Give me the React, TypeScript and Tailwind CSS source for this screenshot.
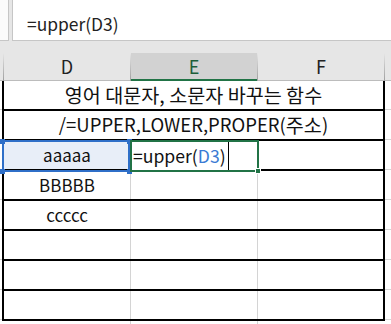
import React from "react";

const cellRows = ["aaaaa", "BBBBB", "ccccc", "", "", ""];

function Sep() {
  return <div className="w-px self-stretch bg-gradient-to-b from-[#e6e6e6] to-[#9e9e9e]" />;
}

function RowShell({ children }: { children: React.ReactNode }) {
  return (
    <div className="flex h-[30px]">
      <div className="w-[2px] flex flex-col justify-end">
        <div className="h-px bg-[#d4d4d4] mb-[1px]" />
      </div>
      <div className="w-[383px] flex border-l-2 border-r-2 border-b-2 border-black">{children}</div>
      <div className="flex-1 flex flex-col justify-end">
        <div className="h-px bg-[#d4d4d4] mb-[1px]" />
      </div>
    </div>
  );
}

export default function App() {
  return (
    <div className="relative w-[391px] h-[324px] overflow-hidden bg-white font-['Noto_Sans_CJK_KR',sans-serif] text-[17px] text-[#111]">
      {/* formula bar */}
      <div className="flex h-[41px] bg-[#e6e6e6]">
        <div className="w-[9px] bg-[#fbfbfb] border-r border-b border-[#c6c6c6]" />
        <div className="w-[3px]" />
        <div className="flex-1 bg-white border-l border-b border-[#c6c6c6] flex items-center pt-[9px] text-[#222] text-[17.4px]">
          <span className="ml-[14px]">=upper(D3)</span>
        </div>
      </div>
      {/* gray band */}
      <div className="h-[12px] bg-[#e6e6e6]" />
      {/* column headers */}
      <div className="flex h-[28px] bg-[#e6e6e6] text-[#222] text-[18px]">
        <div className="w-[3px] border-b border-[#bcbcbc]" />
        <Sep />
        <div className="w-[126px] flex items-center justify-center border-b border-[#bcbcbc]">D</div>
        <Sep />
        <div className="w-[126px] flex items-center justify-center bg-[#d2d2d2] border-b-2 border-[#217346] text-[#1d5e3a]">E</div>
        <Sep />
        <div className="w-[126px] flex items-center justify-center border-b border-[#bcbcbc]">F</div>
        <Sep />
        <div className="flex-1 border-b border-[#bcbcbc]" />
      </div>
      {/* rows */}
      <RowShell>
        <div className="flex-1 flex items-center justify-center text-[19.6px]">영어 대문자, 소문자 바꾸는 함수</div>
      </RowShell>
      <RowShell>
        <div className="flex-1 flex items-center justify-center text-[18.5px]">
          /=UPPER,LOWER,PROPER(<span className="text-[19.6px]">주소</span>)
        </div>
      </RowShell>
      {cellRows.map((d, i) => (
        <RowShell key={i}>
          <div className={`w-[126px] flex items-center justify-center ${i === 0 ? "bg-[#e8eef8]" : ""}`}>{d}</div>
          <div className="w-px bg-[#d4d4d4]" />
          <div className="w-[126px]" />
          <div className="w-px bg-[#d4d4d4]" />
          <div className="flex-1" />
        </RowShell>
      ))}
      {/* grid continuation below */}
      <div className="flex h-[10px]">
        <div className="w-[130px]" />
        <div className="w-px bg-[#d4d4d4]" />
        <div className="w-[126px]" />
        <div className="w-px bg-[#d4d4d4]" />
      </div>

      {/* reference highlight on D3 */}
      <div className="absolute left-[2px] top-[140px] w-[128px] h-[32px] border-2 border-[#2f6fc8]" />
      <div className="absolute left-0 top-[139px] w-[5px] h-[5px] bg-[#2f6fc8]" />
      <div className="absolute left-0 top-[169px] w-[5px] h-[5px] bg-[#2f6fc8]" />
      <div className="absolute left-[127px] top-[139px] w-[5px] h-[5px] bg-[#2f6fc8]" />
      <div className="absolute left-[127px] top-[169px] w-[5px] h-[5px] bg-[#2f6fc8]" />

      {/* editing cell E3 */}
      <div className="absolute left-[130px] top-[140px] w-[129px] h-[32px] border-2 border-[#217346] bg-white flex items-center pl-[1px] text-[17.6px]">
        <span>=upper(</span>
        <span className="text-[#3b7bd4]">D3</span>
        <span>)</span>
        <span className="ml-[2px] w-px h-[28px] bg-black" />
      </div>
      <div className="absolute left-[255px] top-[168px] w-[6px] h-[6px] bg-[#217346] border border-white" />
    </div>
  );
}
